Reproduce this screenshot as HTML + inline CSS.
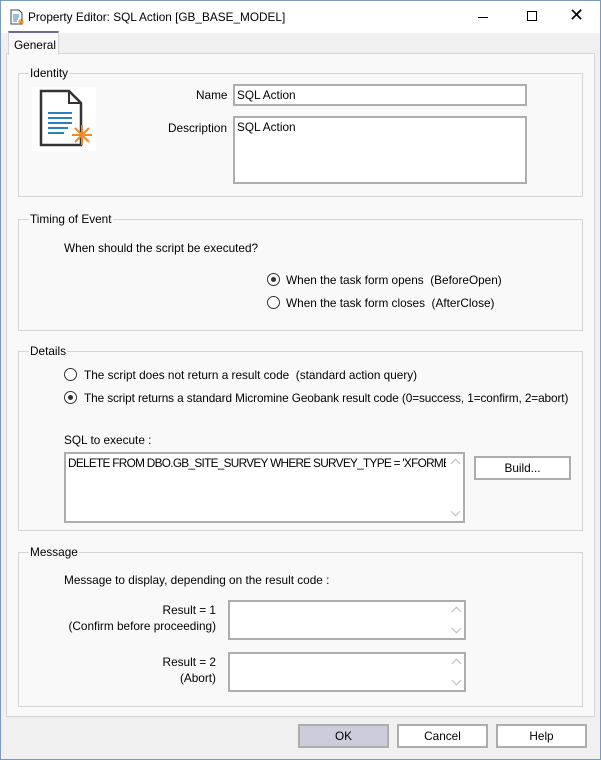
<!DOCTYPE html><html><head><style>
*{box-sizing:border-box}body{margin:0;width:601px;height:760px;background:#f0f0f0;font-family:"Liberation Sans",sans-serif;font-size:11.8px;color:#000;position:relative;overflow:hidden;border:1px solid #7a99c0}
.a{position:absolute}
.g{position:absolute;border:1px solid #d5d5d5}
.gl{position:absolute;background:#f9f9f9;padding:0 1px;top:-8px;left:10px}
.tb{position:absolute;background:#fff;border:2px solid #adadad;padding:2px 2px}
.r{position:absolute;width:13px;height:13px;border:1px solid #333;border-radius:50%;background:#fff}
.r.on::after{content:"";position:absolute;left:3px;top:3px;width:5px;height:5px;border-radius:50%;background:#333}
.btn{position:absolute;height:24px;border:2px solid #adadad;background:#fff;text-align:center;line-height:20px}
.up,.dn{position:absolute;right:4px;width:7px;height:7px;border-left:1px solid #bbb;border-top:1px solid #bbb}
.up{top:6px;transform:rotate(45deg)}
.dn{bottom:6px;transform:rotate(225deg)}
</style></head><body>
<div class="a" style="left:0;top:0;width:599px;height:32px;background:#fff"></div>
<svg class="a" style="left:8px;top:8px" width="16" height="16"><path d="M2 1h8l3 3v11H2z" fill="#fff" stroke="#444"/><path d="M4 6h6M4 8h6M4 10h5M4 12h4" stroke="#2a7fc0"/><path d="M12 10v6M9 13h6M10 11l4 4M14 11l-4 4" stroke="#e8882a"/></svg>
<div class="a" style="left:27px;top:9px">Property Editor: SQL Action [GB_BASE_MODEL]</div>
<div class="a" style="left:477px;top:16px;width:10px;height:1px;background:#000"></div>
<div class="a" style="left:526px;top:10px;width:10px;height:10px;border:1px solid #000"></div>
<div class="a" style="left:568px;top:4px;font-size:18px;font-weight:300">✕</div>
<div class="a" style="left:5px;top:52px;width:589px;height:664px;background:#f9f9f9;border:1px solid #d5d5d5"></div>
<div class="a" style="left:7px;top:30px;width:51px;height:24px;background:#f9f9f9;border:1px solid #d5d5d5;border-top:2px solid #6a6a8a;border-bottom:none;padding:5px 0 0 5px">General</div>

<div class="g" style="left:17px;top:72px;width:565px;height:124px"><span class="gl">Identity</span></div>
<svg class="a" style="left:31px;top:86px" width="64" height="64"><rect width="64" height="64" fill="#fff"/><path d="M9 4h28l12 12v42H9z" fill="#fff" stroke="#333" stroke-width="2.5"/><path d="M37 4v12h12" fill="none" stroke="#333" stroke-width="2"/><path d="M16 26h24M16 31h24M16 36h24M16 41h20M16 46h16" stroke="#2a7fc0" stroke-width="2"/><path d="M50 38v20M40 48h20M43 41l14 14M57 41l-14 14" stroke="#ee8a2c" stroke-width="2"/></svg>
<div class="a" style="left:195px;top:87px">Name</div>
<div class="tb" style="left:232px;top:83px;width:294px;height:22px">SQL Action</div>
<div class="a" style="left:167px;top:120px">Description</div>
<div class="tb" style="left:232px;top:115px;width:294px;height:68px">SQL Action</div>

<div class="g" style="left:17px;top:218px;width:565px;height:112px"><span class="gl">Timing of Event</span></div>
<div class="a" style="left:63px;top:240px">When should the script be executed?</div>
<div class="r on" style="left:266px;top:272px"></div><div class="a" style="left:285px;top:272px">When the task form opens&nbsp; (BeforeOpen)</div>
<div class="r" style="left:266px;top:295px"></div><div class="a" style="left:285px;top:295px">When the task form closes&nbsp; (AfterClose)</div>

<div class="g" style="left:17px;top:350px;width:565px;height:180px"><span class="gl">Details</span></div>
<div class="r" style="left:63px;top:367px"></div><div class="a" style="left:83px;top:367px">The script does not return a result code&nbsp; (standard action query)</div>
<div class="r on" style="left:63px;top:390px"></div><div class="a" style="left:83px;top:390px;letter-spacing:-0.1px">The script returns a standard Micromine Geobank result code (0=success, 1=confirm, 2=abort)</div>
<div class="a" style="left:63px;top:432px">SQL to execute :</div>
<div class="tb" style="left:63px;top:451px;width:401px;height:71px;overflow:hidden;white-space:nowrap"><span style="letter-spacing:-0.7px">DELETE FROM DBO.GB_SITE_SURVEY WHERE SURVEY_TYPE = 'XFORMED</span><div style="position:absolute;right:0;top:0;bottom:0;width:17px;background:#fff"><div class="up"></div><div class="dn"></div></div></div>
<div class="btn" style="left:473px;top:455px;width:97px">Build...</div>

<div class="g" style="left:17px;top:551px;width:565px;height:155px"><span class="gl">Message</span></div>
<div class="a" style="left:63px;top:572px">Message to display, depending on the result code :</div>
<div class="a" style="left:40px;top:601px;width:175px;text-align:right;line-height:16px">Result = 1<br>(Confirm before proceeding)</div>
<div class="tb" style="left:227px;top:599px;width:238px;height:40px"><div class="up"></div><div class="dn"></div></div>
<div class="a" style="left:40px;top:653px;width:175px;text-align:right;line-height:16px">Result = 2<br>(Abort)</div>
<div class="tb" style="left:227px;top:651px;width:238px;height:40px"><div class="up"></div><div class="dn"></div></div>

<div class="btn" style="left:297px;top:723px;width:91px;background:#ccccdb">OK</div>
<div class="btn" style="left:396px;top:723px;width:91px">Cancel</div>
<div class="btn" style="left:495px;top:723px;width:91px">Help</div>
</body></html>
